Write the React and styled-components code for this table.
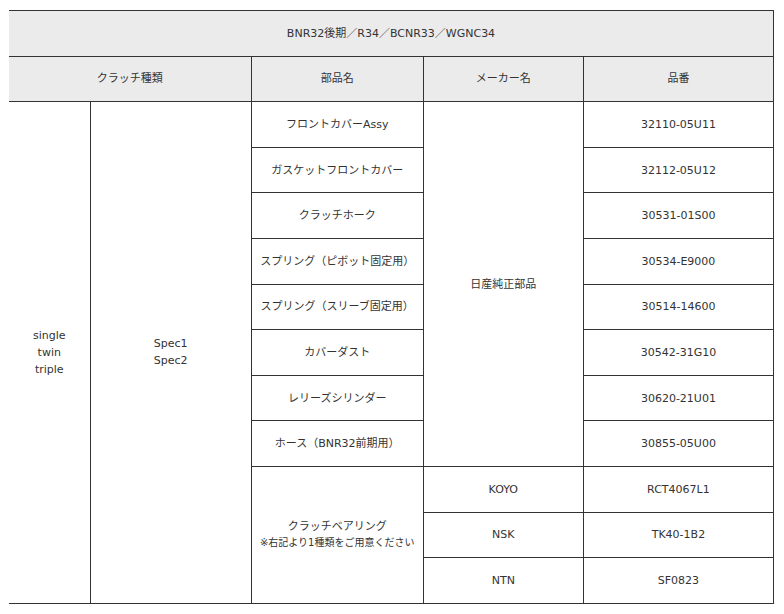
import React from 'react';
import styled, { createGlobalStyle } from 'styled-components';

const GlobalStyle = createGlobalStyle`
  html, body {
    margin: 0;
    padding: 0;
    background: #ffffff;
  }
  body {
    font-family: "DejaVu Sans", "Noto Sans CJK JP", sans-serif;
    color: #333333;
  }
`;

const parts = [
  { name: 'フロントカバーAssy', code: '32110-05U11' },
  { name: 'ガスケットフロントカバー', code: '32112-05U12' },
  { name: 'クラッチホーク', code: '30531-01S00' },
  { name: 'スプリング（ピボット固定用）', code: '30534-E9000' },
  { name: 'スプリング（スリーブ固定用）', code: '30514-14600' },
  { name: 'カバーダスト', code: '30542-31G10' },
  { name: 'レリーズシリンダー', code: '30620-21U01' },
  { name: 'ホース（BNR32前期用）', code: '30855-05U00' },
];

const bearings = [
  { maker: 'KOYO', code: 'RCT4067L1' },
  { maker: 'NSK', code: 'TK40-1B2' },
  { maker: 'NTN', code: 'SF0823' },
];

const Page = styled.div`
  padding: 10px 0 0 9px;
`;

const Table = styled.table`
  width: 765px;
  border-collapse: collapse;
  table-layout: fixed;
  border-left: 1px hidden;
  font-size: 11px;
`;

const Row = styled.tr`
  height: 45.6px;
`;

const Cell = styled.td`
  border: 1px solid #333333;
  background: ${(p) => (p.$head ? '#ebebeb' : '#ffffff')};
  text-align: center;
  vertical-align: middle;
  padding: 0 4px;
  line-height: 17px;
  font-weight: normal;
`;

const Note = styled.span`
  display: block;
  font-size: 10px;
  line-height: 16px;
`;

export default function App() {
  return (
    <Page>
      <GlobalStyle />
      <Table>
        <colgroup>
          <col style={{ width: 81 }} />
          <col style={{ width: 161 }} />
          <col style={{ width: 172 }} />
          <col style={{ width: 160 }} />
          <col style={{ width: 190 }} />
        </colgroup>
        <tbody>
          <Row>
            <Cell as="th" $head colSpan={5}>BNR32後期／R34／BCNR33／WGNC34</Cell>
          </Row>
          <Row>
            <Cell as="th" $head colSpan={2}>クラッチ種類</Cell>
            <Cell as="th" $head>部品名</Cell>
            <Cell as="th" $head>メーカー名</Cell>
            <Cell as="th" $head>品番</Cell>
          </Row>
          {parts.map((p, i) => (
            <Row key={p.code}>
              {i === 0 && (
                <>
                  <Cell rowSpan={11}>single<br />twin<br />triple</Cell>
                  <Cell rowSpan={11}>Spec1<br />Spec2</Cell>
                </>
              )}
              <Cell>{p.name}</Cell>
              {i === 0 && <Cell rowSpan={8}>日産純正部品</Cell>}
              <Cell>{p.code}</Cell>
            </Row>
          ))}
          {bearings.map((b, i) => (
            <Row key={b.code}>
              {i === 0 && (
                <Cell rowSpan={3}>
                  クラッチベアリング
                  <Note>※右記より1種類をご用意ください</Note>
                </Cell>
              )}
              <Cell>{b.maker}</Cell>
              <Cell>{b.code}</Cell>
            </Row>
          ))}
        </tbody>
      </Table>
    </Page>
  );
}
